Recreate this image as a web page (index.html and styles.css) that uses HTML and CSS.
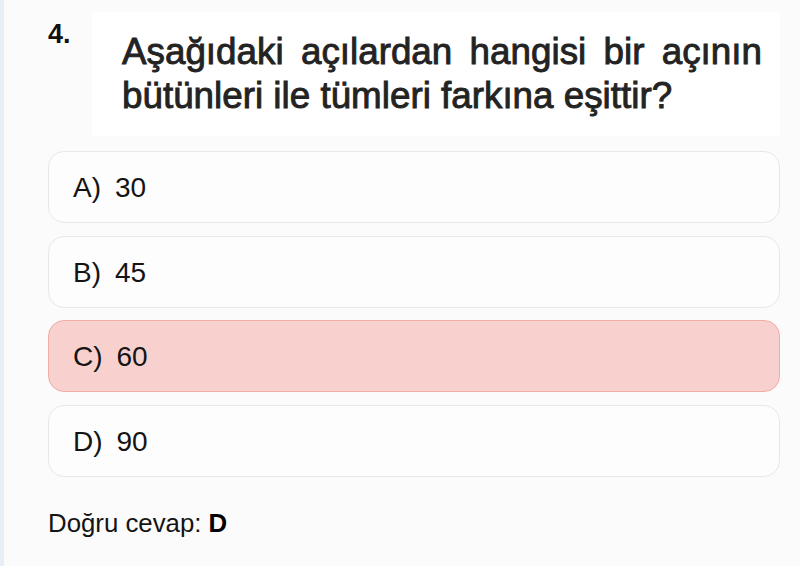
FILE: index.html
```html
<!DOCTYPE html>
<html lang="tr">
<head>
<meta charset="utf-8">
<title>Soru 4</title>
<link rel="stylesheet" href="styles.css">
</head>
<body>
<main class="page">
  <section class="question">
    <div class="q-number">4.</div>
    <div class="q-box">
      <p class="q-text">Aşağıdaki açılardan hangisi bir açının bütünleri ile tümleri farkına eşittir?</p>
    </div>
  </section>
  <ul class="options">
    <li class="option"><span class="opt-letter">A)</span><span class="opt-value">30</span></li>
    <li class="option"><span class="opt-letter">B)</span><span class="opt-value">45</span></li>
    <li class="option option-wrong"><span class="opt-letter">C)</span><span class="opt-value">60</span></li>
    <li class="option"><span class="opt-letter">D)</span><span class="opt-value">90</span></li>
  </ul>
  <p class="answer">Doğru cevap: <strong>D</strong></p>
</main>
</body>
</html>
```

FILE: styles.css
```css
html, body {
  margin: 0;
  padding: 0;
}
body {
  background: #fbfbfb;
  border-left: 4px solid #e7eef6;
  min-height: 566px;
  box-sizing: border-box;
  font-family: "Liberation Sans", Arial, sans-serif;
  color: #141414;
}
.page {
  padding: 12px 20px 0 44px;
}
.question {
  display: flex;
  align-items: flex-start;
}
.q-number {
  width: 44px;
  flex: none;
  padding-top: 7px;
  font-size: 27px;
  font-weight: bold;
  color: #111;
}
.q-box {
  width: 688px;
  box-sizing: border-box;
  background: #ffffff;
  padding: 18px 18px 19px 30px;
}
.q-text {
  margin: 0;
  font-size: 36.8px;
  line-height: 43.5px;
  color: #232323;
  -webkit-text-stroke: 0.9px #232323;
  text-align: justify;
  text-align-last: left;
}
.options {
  list-style: none;
  margin: 15px 0 0 0;
  padding: 0;
  display: flex;
  flex-direction: column;
  gap: 12.5px;
}
.option {
  height: 72px;
  box-sizing: border-box;
  display: flex;
  align-items: center;
  padding: 2px 0 0 24px;
  border: 1px solid #e8e8e8;
  border-radius: 16px;
  background: #fdfdfd;
  font-size: 28px;
  color: #141414;
}
.option-wrong {
  background: #f8d1cf;
  border-color: #f0aca7;
}
.opt-letter {
  margin-right: 14px;
}
.answer {
  margin: 32px 0 0 0;
  font-size: 25.8px;
  color: #141414;
}
.answer strong {
  font-weight: bold;
  color: #000;
}
```
